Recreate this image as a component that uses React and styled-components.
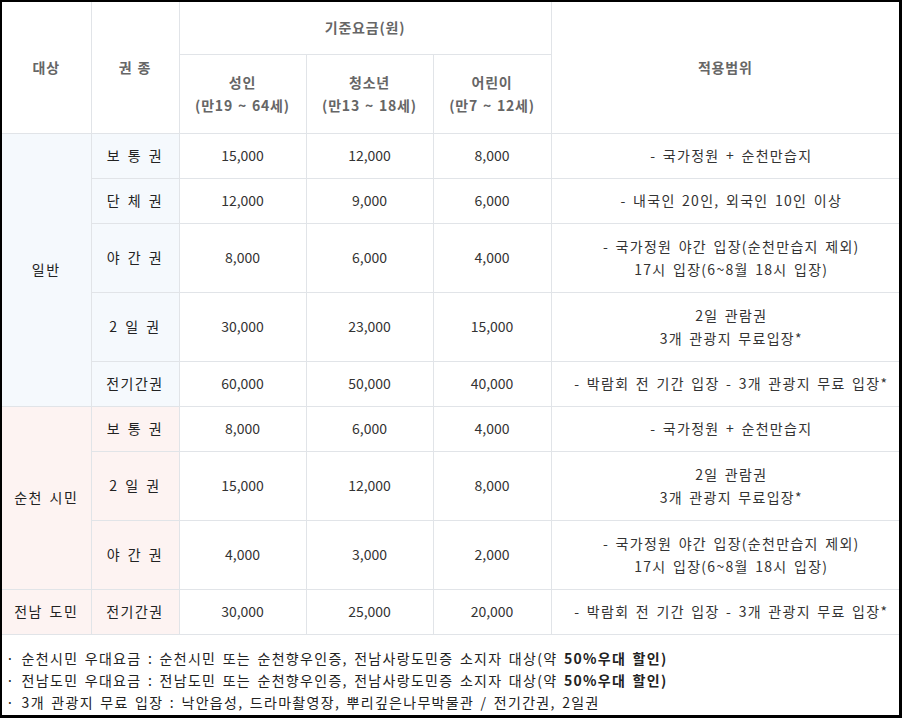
import React from "react";
import styled, { createGlobalStyle } from "styled-components";

const GlobalStyle = createGlobalStyle`
  html, body {
    margin: 0;
    padding: 0;
    background: #000;
  }
  body {
    font-family: "Noto Sans CJK KR", "Noto Sans", sans-serif;
  }
`;

const Frame = styled.div`
  width: 897px;
  height: 713px;
  margin: 2px 0 0 2px;
  background: #fff;
  overflow: hidden;
`;

const Table = styled.table`
  border-collapse: collapse;
  table-layout: fixed;
  width: 897px;
  font-size: 14px;
  color: #333;

  td, th {
    border: 1px solid #e1e4e8;
    padding: 0;
    text-align: center;
    vertical-align: middle;
    line-height: 23px;
    white-space: nowrap;
  }
  tr > :first-child {
    border-left: none;
  }
  tr > :last-child {
    border-right: none;
  }
  thead tr:first-child th {
    border-top: none;
  }
`;

const Head = styled.th`
  font-weight: 700;
  color: #666;
  background: #fff;
  letter-spacing: 0.8px;
  word-spacing: 1px;
`;

const Row = styled.tr`
  height: ${(p) => p.$h}px;
`;

const Group = styled.td`
  background: ${(p) => (p.$tone === "blue" ? "#f5f9fd" : "#fdf3f2")};
  color: #222;
  letter-spacing: 1.5px;
  word-spacing: 2px;
`;

const Kind = styled.td`
  background: ${(p) => (p.$tone === "blue" ? "#f5f9fd" : "#fdf3f2")};
  color: #222;
  letter-spacing: 1.5px;
  word-spacing: 2px;
`;

const Price = styled.td`
  color: #333;
`;

const Scope = styled.td`
  color: #333;
  letter-spacing: 1.3px;
  word-spacing: 2px;
  && {
    padding-left: 12px;
  }
`;

const Notes = styled.div`
  padding: 12px 0 0 4px;
  font-size: 14px;
  line-height: 22px;
  color: #222;
  letter-spacing: 1.3px;
  word-spacing: 2px;
  white-space: nowrap;
`;

const Strong = styled.b`
  font-weight: 700;
`;

const rows = [
  { group: "일반", tone: "blue", span: 5, kind: "보 통 권", p: ["15,000", "12,000", "8,000"], scope: ["- 국가정원 + 순천만습지"], h: 45 },
  { tone: "blue", kind: "단 체 권", p: ["12,000", "9,000", "6,000"], scope: ["- 내국인 20인, 외국인 10인 이상"], h: 45 },
  { tone: "blue", kind: "야 간 권", p: ["8,000", "6,000", "4,000"], scope: ["- 국가정원 야간 입장(순천만습지 제외)", "17시 입장(6~8월 18시 입장)"], h: 69 },
  { tone: "blue", kind: "2 일 권", p: ["30,000", "23,000", "15,000"], scope: ["2일 관람권", "3개 관광지 무료입장*"], h: 69 },
  { tone: "blue", kind: "전기간권", p: ["60,000", "50,000", "40,000"], scope: ["- 박람회 전 기간 입장 - 3개 관광지 무료 입장*"], h: 45 },
  { group: "순천 시민", tone: "pink", span: 3, kind: "보 통 권", p: ["8,000", "6,000", "4,000"], scope: ["- 국가정원 + 순천만습지"], h: 45 },
  { tone: "pink", kind: "2 일 권", p: ["15,000", "12,000", "8,000"], scope: ["2일 관람권", "3개 관광지 무료입장*"], h: 69 },
  { tone: "pink", kind: "야 간 권", p: ["4,000", "3,000", "2,000"], scope: ["- 국가정원 야간 입장(순천만습지 제외)", "17시 입장(6~8월 18시 입장)"], h: 69 },
  { group: "전남 도민", tone: "pink", span: 1, kind: "전기간권", p: ["30,000", "25,000", "20,000"], scope: ["- 박람회 전 기간 입장 - 3개 관광지 무료 입장*"], h: 45 },
];

export default function App() {
  return (
    <>
      <GlobalStyle />
      <Frame>
        <Table>
          <colgroup>
            <col style={{ width: 89 }} />
            <col style={{ width: 88 }} />
            <col style={{ width: 127 }} />
            <col style={{ width: 127 }} />
            <col style={{ width: 118 }} />
            <col style={{ width: 348 }} />
          </colgroup>
          <thead>
            <Row $h={52}>
              <Head rowSpan={2}>대상</Head>
              <Head rowSpan={2}>권 종</Head>
              <Head colSpan={3}>기준요금(원)</Head>
              <Head rowSpan={2}>적용범위</Head>
            </Row>
            <Row $h={79}>
              <Head>성인<br />(만19 ~ 64세)</Head>
              <Head>청소년<br />(만13 ~ 18세)</Head>
              <Head>어린이<br />(만7 ~ 12세)</Head>
            </Row>
          </thead>
          <tbody>
            {rows.map((r, i) => (
              <Row key={i} $h={r.h}>
                {r.group && (
                  <Group rowSpan={r.span} $tone={r.tone}>{r.group}</Group>
                )}
                <Kind $tone={r.tone}>{r.kind}</Kind>
                {r.p.map((v, j) => (
                  <Price key={j}>{v}</Price>
                ))}
                <Scope>
                  {r.scope.map((s, k) => (
                    <div key={k}>{s}</div>
                  ))}
                </Scope>
              </Row>
            ))}
          </tbody>
        </Table>
        <Notes>
          <div>· 순천시민 우대요금 : 순천시민 또는 순천향우인증, 전남사랑도민증 소지자 대상(약 <Strong>50%우대 할인)</Strong></div>
          <div>· 전남도민 우대요금 : 전남도민 또는 순천향우인증, 전남사랑도민증 소지자 대상(약 <Strong>50%우대 할인)</Strong></div>
          <div>· 3개 관광지 무료 입장 : 낙안읍성, 드라마촬영장, 뿌리깊은나무박물관 / 전기간권, 2일권</div>
        </Notes>
      </Frame>
    </>
  );
}
